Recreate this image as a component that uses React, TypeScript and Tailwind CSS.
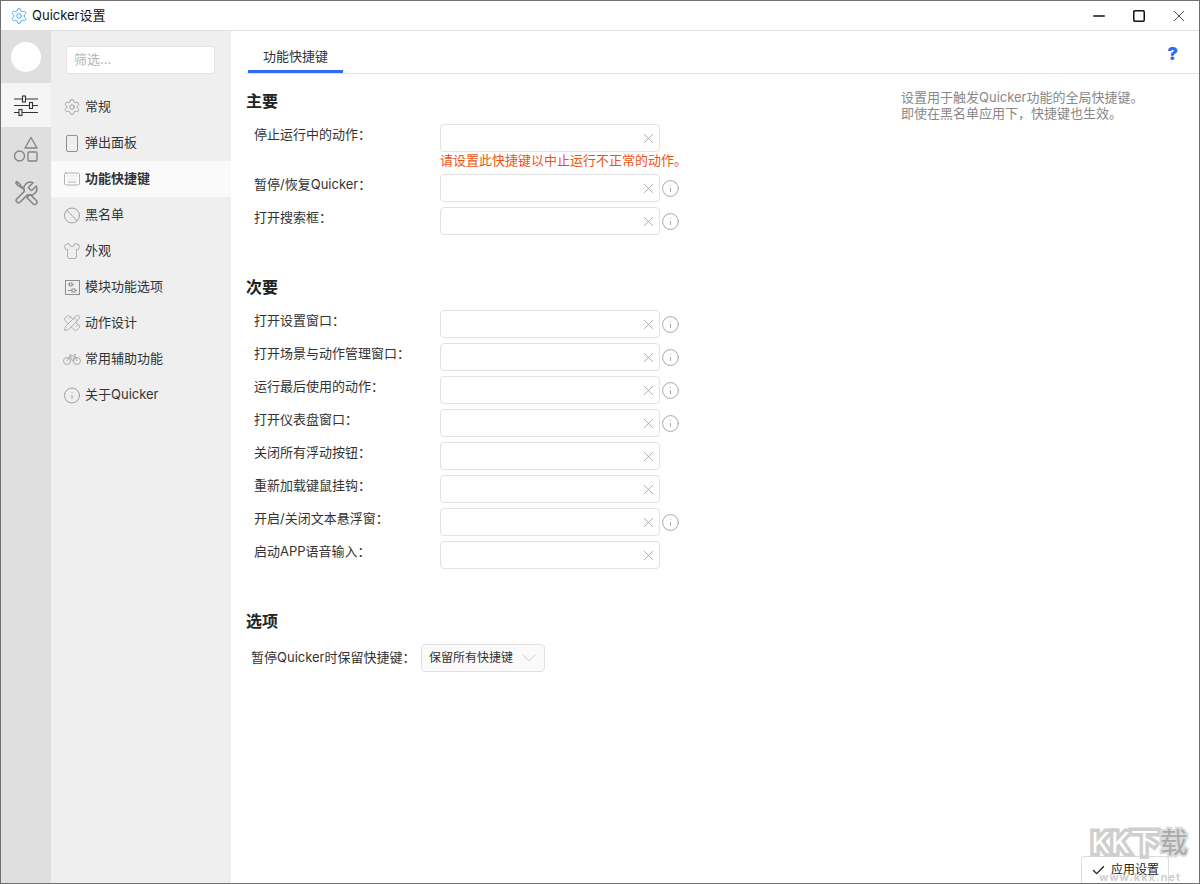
import { Ban, Check, ChevronDown, Info, Keyboard, Minus, PencilRuler, Settings, Shirt, Square, X } from "lucide-react"
import type { ReactNode } from "react"

const font = "font-['Inter','Noto_Sans_CJK_SC',sans-serif]"

const SlidersIcon = () => (
  <svg width="24" height="24" viewBox="0 0 24 24" fill="none" stroke="#333" strokeWidth="1.1">
    <path d="M0 6h8.5M11.5 6H24M0 12.5h15.500M18.500 12.500H24M0 19.500h5M8 19.500h16" />
    <rect x="8.500" y="3" width="3" height="6" />
    <rect x="15.500" y="9.500" width="3" height="6" />
    <rect x="5" y="16.500" width="3" height="6" />
  </svg>
)

const ShapesIcon = () => (
  <svg width="26" height="26" viewBox="0 0 26 26" fill="none" stroke="#858585" strokeWidth="1.4">
    <path d="M18 1.500l6 10.500H12z" strokeLinejoin="round" />
    <circle cx="6.500" cy="20" r="5" />
    <rect x="15" y="16" width="9" height="9" rx="1" />
  </svg>
)

const ToolsIcon = () => (
  <svg width="26" height="26" viewBox="0 0 24 24" fill="none" stroke="#858585" strokeWidth="1.4" strokeLinejoin="round" strokeLinecap="round">
    <path d="M14.700 6.300a1 1 0 0 0 0 1.400l1.600 1.600a1 1 0 0 0 1.400 0l3.770-3.770a6 6 0 0 1-7.940 7.940l-6.910 6.910a2.120 2.120 0 0 1-3-3l6.910-6.910a6 6 0 0 1 7.940-7.940l-3.760 3.760z" />
    <path d="M8.500 7.500L4.500 5 2.500 2.500l1-1L6 3.500l2.500 3.500 2 2" />
    <path d="M13.500 15.500l1.500-1.500 1-.5 5.500 5.500a2.120 2.120 0 0 1-3 3L13 16.500z" />
  </svg>
)

const ModuleIcon = () => (
  <svg width="17" height="17" viewBox="0 0 17 17" fill="none" stroke="#8f8f8f" strokeWidth="1">
    <rect x="1.500" y="1.500" width="14" height="14" />
    <path d="M4 5.500h1.500M8 5.500h2M4 11.500h4M11 11.500h2" />
    <rect x="5.500" y="4" width="2.500" height="3" />
    <rect x="8" y="10" width="3" height="3" />
  </svg>
)

const BikeIcon = () => (
  <svg width="18" height="12" viewBox="0 0 18 12" fill="none" stroke="#aaa" strokeWidth="1">
    <circle cx="4" cy="8" r="3.500" />
    <circle cx="14" cy="8" r="3.500" />
    <path d="M4 8l3-5h5l2 5M7 3l2.500 5L12 3M6 2h2.500M11 1.500h2" />
  </svg>
)

const navItems: { label: string; icon: ReactNode; active?: boolean }[] = [
  { label: "常规", icon: <Settings size={18} strokeWidth={1.1} color="#8f8f8f" /> },
  { label: "弹出面板", icon: <span className="block h-[17px] w-3 rounded-[2px] border border-[#8f8f8f]" /> },
  { label: "功能快捷键", icon: <Keyboard size={18} strokeWidth={0.9} color="#8f8f8f" />, active: true },
  { label: "黑名单", icon: <Ban size={19} strokeWidth={1.1} color="#8f8f8f" /> },
  { label: "外观", icon: <Shirt size={18} strokeWidth={0.9} color="#8f8f8f" /> },
  { label: "模块功能选项", icon: <ModuleIcon /> },
  { label: "动作设计", icon: <PencilRuler size={18} strokeWidth={0.9} color="#8f8f8f" /> },
  { label: "常用辅助功能", icon: <BikeIcon /> },
  { label: "关于Quicker", icon: <Info size={19} strokeWidth={1.1} color="#8f8f8f" /> },
]

const mainRows = [
  { label: "暂停/恢复Quicker：", info: true },
  { label: "打开搜索框：", info: true },
]

const secondaryRows = [
  { label: "打开设置窗口：", info: true },
  { label: "打开场景与动作管理窗口：", info: true },
  { label: "运行最后使用的动作：", info: true },
  { label: "打开仪表盘窗口：", info: true },
  { label: "关闭所有浮动按钮：", info: false },
  { label: "重新加载键鼠挂钩：", info: false },
  { label: "开启/关闭文本悬浮窗：", info: true },
  { label: "启动APP语音输入：", info: false },
]

function Heading({ children }: { children: ReactNode }) {
  return <h2 className="h-6 text-[16px] leading-6 font-bold text-[#222]">{children}</h2>
}

function HotkeyRow({ label, info }: { label: string; info?: boolean }) {
  return (
    <div className="flex h-7 items-center pl-2">
      <div className="w-[186px] pb-1.5 text-[13px] text-[#333]">{label}</div>
      <div className="flex h-7 w-[220px] items-center justify-end rounded-[4px] border border-[#e2e2e2] bg-white pr-[2px]">
        <X size={17} strokeWidth={0.9} color="#888" />
      </div>
      {info && (
        <span className="ml-[1px] text-[#a3a3a3]">
          <Info size={19} strokeWidth={1.2} />
        </span>
      )}
    </div>
  )
}

export default function App() {
  return (
    <div className={`${font} relative flex h-[884px] w-[1200px] flex-col overflow-hidden border border-[#6f6f6f] bg-white`}>
      {/* title bar */}
      <header className="flex h-[30px] shrink-0 items-center border-b border-[#dedede] pl-[9px]">
        <Settings size={18} strokeWidth={1.2} color="#2ea4f1" />
        <span className="ml-[4px] text-[13px] text-[#111]">Quicker设置</span>
        <div className="ml-auto flex items-center">
          <span className="flex w-10 justify-center"><Minus size={18} strokeWidth={1.5} color="#111" absoluteStrokeWidth /></span>
          <span className="flex w-10 justify-center"><Square size={14} strokeWidth={1.5} color="#111" absoluteStrokeWidth /></span>
          <span className="flex w-10 justify-center"><X size={18} strokeWidth={1} color="#111" /></span>
        </div>
      </header>

      <div className="flex min-h-0 flex-1">
        {/* icon rail */}
        <aside className="flex w-[50px] shrink-0 flex-col items-center bg-[#dfdfdf]">
          <div className="flex h-[52px] w-full items-center justify-center">
            <div className="h-[30px] w-[30px] rounded-full bg-white" />
          </div>
          <div className="flex h-11 w-full items-center justify-center bg-[#f5f5f5]"><SlidersIcon /></div>
          <div className="flex h-11 w-full items-center justify-center"><ShapesIcon /></div>
          <div className="flex h-11 w-full items-center justify-center"><ToolsIcon /></div>
        </aside>

        {/* nav */}
        <nav className="w-[180px] shrink-0 bg-[#efefef] pt-[15px]">
          <div className="mx-[15px] flex h-7 w-[149px] items-center rounded-[4px] border border-[#e4e4e4] bg-white px-[7px] text-[13px] text-[#b5b5b5]">
            筛选...
          </div>
          <ul className="mt-[15px]">
            {navItems.map((item) => (
              <li
                key={item.label}
                className={`flex h-9 items-center pl-[12px] text-[13px] text-[#333] ${item.active ? "bg-[#fafafa] font-bold" : ""}`}
              >
                <span className="flex w-[18px] justify-center">{item.icon}</span>
                <span className="ml-[4px]">{item.label}</span>
              </li>
            ))}
          </ul>
        </nav>

        {/* content */}
        <main className="flex min-w-0 flex-1 flex-col">
          <div className="ml-[15px] flex h-[43px] shrink-0 items-end justify-between border-b border-[#e2e2e2]">
            <div className="ml-[2px] flex h-[31px] w-[95px] items-start justify-center border-b-[3px] border-[#2f6bf0] pt-[4px] text-[13px] leading-[20px] text-[#333]">
              功能快捷键
            </div>
            <span className="mr-[21px] self-center pt-[4px] text-[18px] leading-none font-black text-[#2f6bf0]">?</span>
          </div>

          <div className="flex">
            <div className="w-[640px] pl-[15px]">
              <div className="mt-[15px]"><Heading>主要</Heading></div>
              <div className="mt-[11px]">
                <HotkeyRow label="停止运行中的动作：" />
                <div className="ml-[194px] h-[22px] text-[13px] leading-4 whitespace-nowrap text-[#f2500f]">
                  请设置此快捷键以中止运行不正常的动作。
                </div>
                <div className="flex flex-col gap-[5px]">
                  {mainRows.map((row) => (
                    <HotkeyRow key={row.label} label={row.label} info={row.info} />
                  ))}
                </div>
              </div>

              <div className="mt-[40px]"><Heading>次要</Heading></div>
              <div className="mt-[11px] flex flex-col gap-[5px]">
                {secondaryRows.map((row) => (
                  <HotkeyRow key={row.label} label={row.label} info={row.info} />
                ))}
              </div>

              <div className="mt-[40px]"><Heading>选项</Heading></div>
              <div className="mt-[11px] flex h-7 items-center pl-[5px]">
                <span className="w-[170px] text-[13px] text-[#333]">暂停Quicker时保留快捷键：</span>
                <div className="flex h-7 w-[124px] items-center justify-between rounded-[4px] border border-[#e2e2e2] bg-[#fafafa] pr-[3px] pl-[7px] text-[12px] text-[#333]">
                  保留所有快捷键
                  <ChevronDown size={24} strokeWidth={0.7} color="#bbb" />
                </div>
              </div>
            </div>

            <p className="mt-[15px] ml-[30px] text-[13px] leading-4 text-[#888]">
              设置用于触发Quicker功能的全局快捷键。
              <br />
              即使在黑名单应用下，快捷键也生效。
            </p>
          </div>

          <div className="mt-auto mr-[30px] flex justify-end">
            <div className="flex h-[27px] w-[88px] items-center justify-center gap-[5px] rounded-t-[4px] border border-b-0 border-[#dcdcdc] text-[12px] text-[#222]">
              <Check size={15} strokeWidth={2.2} />
              应用设置
            </div>
          </div>
        </main>
      </div>

      {/* download site watermark */}
      <div className="pointer-events-none absolute right-0 bottom-0 flex w-[118px] flex-col items-center">
        <span className="text-[28px] leading-[32px] font-normal tracking-[1px] whitespace-nowrap text-white [-webkit-text-stroke:7px_#cfcfcf] [paint-order:stroke_fill]">
          KK下<span className="text-[#aaa] [-webkit-text-stroke:4px_#dcdcdc]">载</span>
        </span>
        <span className="mt-[12px] text-[11px] leading-[12px] font-bold tracking-[1px] text-[#cfcfcf]">www.kkx.net</span>
      </div>
    </div>
  )
}
